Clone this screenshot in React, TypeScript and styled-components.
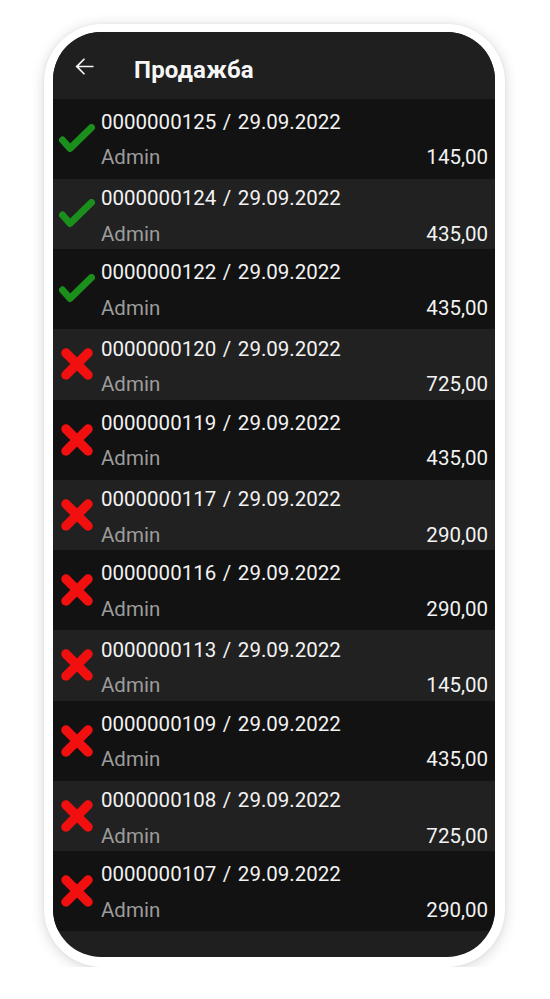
import React from "react";
import styled, { createGlobalStyle } from "styled-components";

const GlobalStyle = createGlobalStyle`
  html, body {
    margin: 0;
    padding: 0;
    background: #ffffff;
    font-family: Roboto, "Noto Sans", "Liberation Sans", sans-serif;
  }
  * { box-sizing: border-box; }
`;

const Page = styled.div`
  padding: 24px 0 0 44px;
`;

const Frame = styled.div`
  width: 461px;
  height: 943px;
  background: #ffffff;
  border-radius: 58px;
  padding: 8px 10px 10px 9px;
  box-shadow: 0 2px 14px rgba(0, 0, 0, 0.16), 0 0 3px rgba(0, 0, 0, 0.06);
`;

const Screen = styled.div`
  width: 100%;
  height: 100%;
  background: #1f1f1f;
  border-radius: 48px;
  overflow: hidden;
  display: flex;
  flex-direction: column;
`;

const Header = styled.div`
  height: 66.5px;
  flex: none;
  display: flex;
  align-items: center;
  padding: 2.5px 0 0 18px;
  background: #1f1f1f;
`;

const BackButton = styled.button`
  border: 0;
  background: none;
  padding: 0;
  width: 27px;
  height: 27px;
  display: flex;
  color: #f4f4f4;
  margin-right: 36px;
`;

const Title = styled.h1`
  margin: 0;
  padding-top: 6px;
  font-size: 24px;
  font-weight: 700;
  color: #f6f6f6;
  letter-spacing: 0.2px;
`;

const List = styled.div`
  display: flex;
  flex-direction: column;
`;

const Row = styled.div<{ $alt: boolean }>`
  display: grid;
  grid-template-columns: 48px 1fr;
  align-items: center;
  flex: none;
  height: ${(p) => (p.$alt ? "70.5px" : "80px")};
  padding: ${(p) => (p.$alt ? "7.5px 7px 0 0" : "11px 7px 0 0")};
  background: ${(p) => (p.$alt ? "#212121" : "#121212")};
`;

const IconCell = styled.div<{ $alt: boolean }>`
  display: flex;
  justify-content: center;
  align-items: center;
  align-self: stretch;
  margin-top: ${(p) => (p.$alt ? "-7.5px" : "-11px")};
`;

const Body = styled.div`
  display: flex;
  flex-direction: column;
  gap: 11.5px;
  align-self: start;
`;

const Line = styled.div`
  display: flex;
  justify-content: space-between;
  font-size: 20.5px;
  line-height: 24px;
`;

const DocText = styled.span`
  color: #f3f3f3;
`;

const Slash = styled.span`
  margin: 0 1.5px;
`;

const UserText = styled.span`
  color: #9c9c9c;
`;

const Amount = styled.span`
  color: #f3f3f3;
`;

const ArrowBack = () => (
  <svg width="27" height="27" viewBox="0 0 24 24" fill="currentColor">
    <path d="M20 11.25H6.9l5.6-5.6-1.06-1.06L4 12l7.44 7.41 1.06-1.06-5.6-5.6H20z" />
  </svg>
);

const CheckIcon = () => (
  <svg width="36" height="30" viewBox="0 0 36 30">
    <polyline
      points="3.5,16 11,24.5 32.5,3.5"
      fill="none"
      stroke="#1b8f1b"
      strokeWidth="7"
      strokeLinecap="round"
      strokeLinejoin="round"
    />
  </svg>
);

const CrossIcon = () => (
  <svg width="38" height="38" viewBox="0 0 38 38">
    <g stroke="#f20f0f" strokeWidth="9.5" strokeLinecap="round">
      <line x1="8" y1="8" x2="30" y2="30" />
      <line x1="30" y1="8" x2="8" y2="30" />
    </g>
  </svg>
);

type Sale = { num: string; ok: boolean; amount: string };

const sales: Sale[] = [
  { num: "0000000125", ok: true, amount: "145,00" },
  { num: "0000000124", ok: true, amount: "435,00" },
  { num: "0000000122", ok: true, amount: "435,00" },
  { num: "0000000120", ok: false, amount: "725,00" },
  { num: "0000000119", ok: false, amount: "435,00" },
  { num: "0000000117", ok: false, amount: "290,00" },
  { num: "0000000116", ok: false, amount: "290,00" },
  { num: "0000000113", ok: false, amount: "145,00" },
  { num: "0000000109", ok: false, amount: "435,00" },
  { num: "0000000108", ok: false, amount: "725,00" },
  { num: "0000000107", ok: false, amount: "290,00" },
];

export default function App() {
  return (
    <Page>
      <GlobalStyle />
      <Frame>
        <Screen>
          <Header>
            <BackButton aria-label="back">
              <ArrowBack />
            </BackButton>
            <Title>Продажба</Title>
          </Header>
          <List>
            {sales.map((s, i) => {
              const alt = i % 2 === 1;
              return (
                <Row key={s.num} $alt={alt}>
                  <IconCell $alt={alt}>{s.ok ? <CheckIcon /> : <CrossIcon />}</IconCell>
                  <Body>
                    <Line>
                      <DocText>
                        {s.num} <Slash>/</Slash> 29.09.2022
                      </DocText>
                    </Line>
                    <Line>
                      <UserText>Admin</UserText>
                      <Amount>{s.amount}</Amount>
                    </Line>
                  </Body>
                </Row>
              );
            })}
          </List>
        </Screen>
      </Frame>
    </Page>
  );
}
